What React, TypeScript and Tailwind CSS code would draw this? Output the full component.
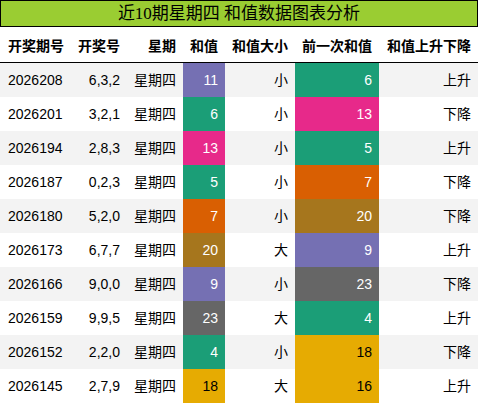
const COLORS: Record<string, { bg: string; fg: string }> = {
  purple: { bg: 'bg-[#7570b3]', fg: 'text-white' },
  teal: { bg: 'bg-[#1b9e77]', fg: 'text-white' },
  pink: { bg: 'bg-[#e7298a]', fg: 'text-white' },
  orange: { bg: 'bg-[#d95f02]', fg: 'text-white' },
  brown: { bg: 'bg-[#a6761d]', fg: 'text-white' },
  grey: { bg: 'bg-[#666666]', fg: 'text-white' },
  yellow: { bg: 'bg-[#e6ab02]', fg: 'text-black' },
};

const rows = [
  { issue: '2026208', nums: '6,3,2', sum: 11, sumC: 'purple', size: '小', prev: 6, prevC: 'teal', trend: '上升' },
  { issue: '2026201', nums: '3,2,1', sum: 6, sumC: 'teal', size: '小', prev: 13, prevC: 'pink', trend: '下降' },
  { issue: '2026194', nums: '2,8,3', sum: 13, sumC: 'pink', size: '小', prev: 5, prevC: 'teal', trend: '上升' },
  { issue: '2026187', nums: '0,2,3', sum: 5, sumC: 'teal', size: '小', prev: 7, prevC: 'orange', trend: '下降' },
  { issue: '2026180', nums: '5,2,0', sum: 7, sumC: 'orange', size: '小', prev: 20, prevC: 'brown', trend: '下降' },
  { issue: '2026173', nums: '6,7,7', sum: 20, sumC: 'brown', size: '大', prev: 9, prevC: 'purple', trend: '上升' },
  { issue: '2026166', nums: '9,0,0', sum: 9, sumC: 'purple', size: '小', prev: 23, prevC: 'grey', trend: '下降' },
  { issue: '2026159', nums: '9,9,5', sum: 23, sumC: 'grey', size: '大', prev: 4, prevC: 'teal', trend: '上升' },
  { issue: '2026152', nums: '2,2,0', sum: 4, sumC: 'teal', size: '小', prev: 18, prevC: 'yellow', trend: '下降' },
  { issue: '2026145', nums: '2,7,9', sum: 18, sumC: 'yellow', size: '大', prev: 16, prevC: 'yellow', trend: '上升' },
];

const cols = 'grid grid-cols-[70px_57px_56px_42px_70px_84px_99px]';

export default function App() {
  return (
    <div
      className="w-[478px] h-[404px] bg-white text-black text-[14px]"
      style={{ fontFamily: '"Liberation Sans", "Noto Sans CJK SC", sans-serif' }}
    >
      <div
        className="h-[27px] border border-black bg-[#9acd32] flex items-center justify-center text-[17px] leading-none"
        style={{ fontFamily: '"Liberation Serif", "Noto Sans CJK SC", serif' }}
      >
        近10期星期四 和值数据图表分析
      </div>

      <div className={`${cols} h-[36px] border-b border-black font-bold items-center pt-[4px]`}>
        <div className="pl-2">开奖期号</div>
        <div className="text-right pr-[7px]">开奖号</div>
        <div className="text-right pr-[7px]">星期</div>
        <div className="text-right pr-[7px]">和值</div>
        <div className="text-right pr-[7px]">和值大小</div>
        <div className="text-right pr-[7px]">前一次和值</div>
        <div className="text-right pr-[7px]">和值上升下降</div>
      </div>

      {rows.map((r, i) => (
        <div key={r.issue} className={`${cols} h-[34px] ${i % 2 === 0 ? 'bg-[#f3f3f3]' : 'bg-white'}`}>
          <div className="pl-2 flex items-center">{r.issue}</div>
          <div className="pr-[7px] flex items-center justify-end">{r.nums}</div>
          <div className="pr-[7px] flex items-center justify-end">星期四</div>
          <div className={`pr-[7px] flex items-center justify-end ${COLORS[r.sumC].bg} ${COLORS[r.sumC].fg}`}>{r.sum}</div>
          <div className="pr-[7px] flex items-center justify-end">{r.size}</div>
          <div className={`pr-[7px] flex items-center justify-end ${COLORS[r.prevC].bg} ${COLORS[r.prevC].fg}`}>{r.prev}</div>
          <div className="pr-[7px] flex items-center justify-end">{r.trend}</div>
        </div>
      ))}
    </div>
  );
}
